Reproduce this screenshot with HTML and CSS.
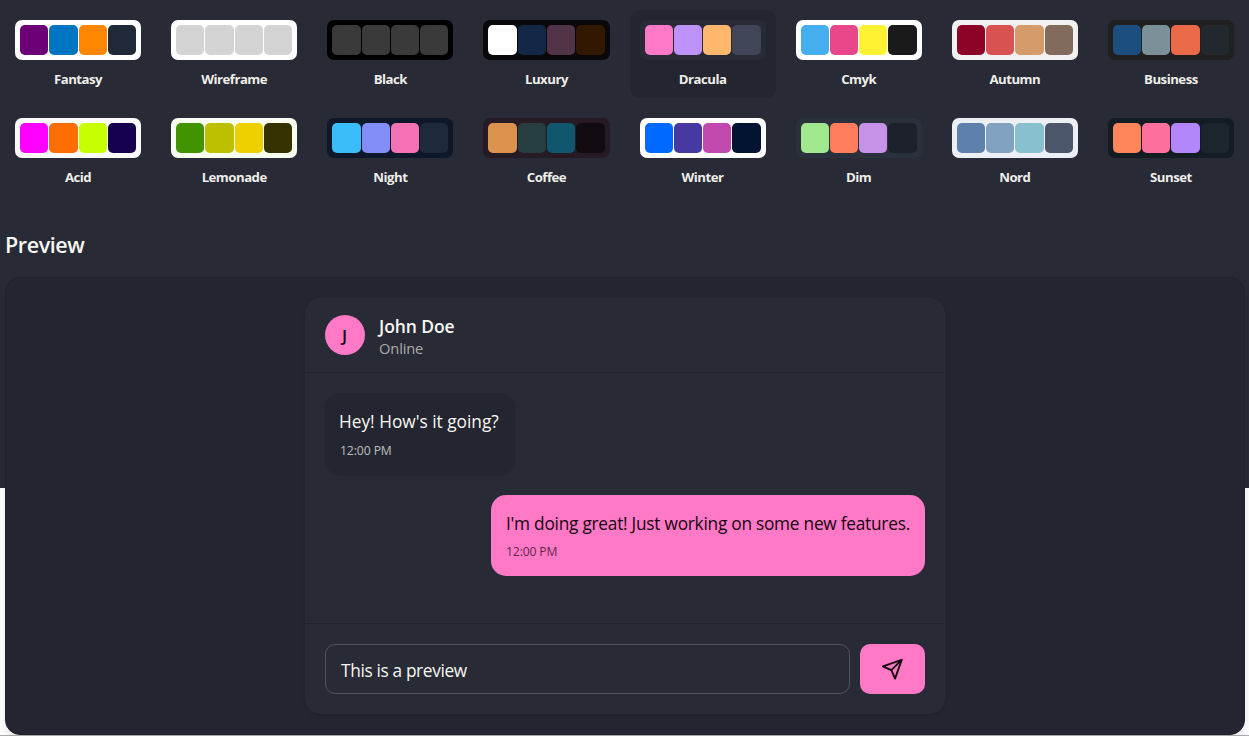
FILE: index.html
```html
<!DOCTYPE html>
<html lang="en">
<head>
<meta charset="utf-8">
<title>Theme settings</title>
<link rel="stylesheet" href="styles.css">
</head>
<body>
<main class="page">
  <div class="themes" id="themes"></div>
  <h3 class="title"><span>Preview</span></h3>
  <section class="preview">
    <div class="chat">
      <header class="chat-head">
        <div class="avatar">J</div>
        <div class="who">
          <h4 class="name"><span>John Doe</span></h4>
          <p class="status"><span>Online</span></p>
        </div>
      </header>
      <div class="messages">
        <div class="bubble received">
          <p class="text">Hey! How's it going?</p>
          <p class="time">12:00 PM</p>
        </div>
        <div class="bubble sent">
          <p class="text">I'm doing great! Just working on some new features.</p>
          <p class="time">12:00 PM</p>
        </div>
      </div>
      <footer class="composer">
        <div class="field"><span>This is a preview</span></div>
        <button class="send" aria-label="Send">
          <svg width="22.5" height="22.5" viewBox="0 0 24 24" fill="none" stroke="currentColor" stroke-width="2" stroke-linecap="round" stroke-linejoin="round"><path d="m22 2-7 20-4-9-9-4Z"/><path d="M22 2 11 13"/></svg>
        </button>
      </footer>
    </div>
  </section>
</main>
<script src="themes.js"></script>
</body>
</html>
```
FILE: styles.css
```css
* { box-sizing: border-box; margin: 0; padding: 0; }
body {
  height: 736px;
  overflow: hidden;
  background: #fff;
  color: #f8f8f2;
  font-family: "Open Sans", "Noto Sans", sans-serif;
  border-bottom: 1px solid #a9a9ac;
}
.page { height: 488px; padding: 10px 5px 0; background: #282a36; }
.themes { display: grid; grid-template-columns: repeat(8, minmax(0, 1fr)); gap: 10px; }
.theme {
  display: flex;
  flex-direction: column;
  align-items: center;
  gap: 7px;
  height: 88px;
  padding: 10px;
  border-radius: 10px;
}
.theme.active { background: #232530; }
.strip {
  display: grid;
  flex: none;
  grid-template-columns: repeat(4, 1fr);
  gap: 1px;
  width: 100%;
  height: 40px;
  padding: 5px;
  border-radius: 7px;
}
.swatch { border-radius: 5px; }
.label {
  font-size: 13.2px;
  line-height: 25px;
  font-weight: 700;
  letter-spacing: -0.5px;
  white-space: nowrap;
  color: #eeeee9;
}
.title { height: 30px; margin: 34px 0 17px; font-size: 21.5px; line-height: 30px; font-weight: 600; letter-spacing: -0.4px; }
.preview {
  width: 1240px;
  height: 458px;
  padding: 20px 0 0;
  border: 1px solid #20222c;
  border-radius: 15px;
  background: #232530;
  box-shadow: 0 5px 10px rgba(0, 0, 0, 0.1);
}
.chat {
  display: flex;
  flex-direction: column;
  width: 640px;
  height: 416px;
  margin: 0 auto;
  overflow: hidden;
  border-radius: 15px;
  background: #282a36;
  box-shadow: 0 1px 3px rgba(0, 0, 0, 0.15);
}
.chat-head {
  display: flex;
  align-items: center;
  gap: 14px;
  height: 75px;
  padding: 0 20px;
  border-bottom: 1px solid #20222c;
}
.avatar {
  display: flex;
  align-items: center;
  justify-content: center;
  width: 40px;
  height: 40px;
  padding-right: 1px;
  border-radius: 50%;
  background: #ff79c6;
  color: #16050e;
  font-size: 17px;
  font-weight: 600;
}
.name { font-size: 17.5px; line-height: 22px; font-weight: 600; letter-spacing: -0.1px; padding-top: 3px; }
.status { font-size: 14.7px; line-height: 22px; letter-spacing: -0.15px; color: #aaaaac; }
.messages { display: flex; flex-direction: column; gap: 20px; height: 250px; padding: 20px; }
.bubble { padding: 15px; border-radius: 15px; white-space: nowrap; }
.received { align-self: flex-start; width: 190px; height: 82px; background: #232530; box-shadow: 0 1px 2px rgba(0, 0, 0, 0.05); }
.received .text { margin-left: -1px; letter-spacing: 0; }
.received .time { margin-top: 7px; letter-spacing: -0.1px; }
.sent { align-self: flex-end; width: 434px; height: 81px; background: #ff79c6; color: #16050e; }
.text { font-size: 17.3px; line-height: 27px; letter-spacing: -0.25px; }
.time { margin-top: 6px; font-size: 12.2px; line-height: 18px; letter-spacing: -0.15px; opacity: 0.7; }
.composer { display: flex; gap: 10px; height: 91px; padding: 20px; border-top: 1px solid #20222c; }
.field {
  flex: 1;
  height: 50px;
  padding: 1px 15px 0;
  border: 1px solid #50525d;
  border-radius: 10px;
  font-size: 17.3px;
  line-height: 50px;
  letter-spacing: -0.35px;
}
.send {
  display: flex;
  align-items: center;
  justify-content: center;
  width: 65px;
  height: 50px;
  border: 0;
  border-radius: 10px;
  background: #ff79c6;
  color: #16050e;
}
```
FILE: themes.js
```js
// name, base colour, then primary, secondary, accent and neutral
const themes = [
  ["Fantasy", "#ffffff", "#6d0076", "#0075c2", "#ff8600", "#1f2937"],
  ["Wireframe", "#ffffff", "#d4d4d4", "#d4d4d4", "#d4d4d4", "#d4d4d4"],
  ["Black", "#000000", "#3a3a3a", "#3a3a3a", "#3a3a3a", "#3a3a3a"],
  ["Luxury", "#09090b", "#ffffff", "#152747", "#513448", "#331800"],
  ["Dracula", "#282a36", "#ff79c6", "#bd93f9", "#ffb86c", "#414558"],
  ["Cmyk", "#ffffff", "#45aeee", "#e8488a", "#fff232", "#1a1a1a"],
  ["Autumn", "#f1f1f1", "#8c0327", "#d85251", "#d59b6a", "#826a5c"],
  ["Business", "#202020", "#1c4e80", "#7c909a", "#ea6947", "#23282e"],
  ["Acid", "#fafafa", "#ff00ff", "#ff6e00", "#c8ff00", "#150050"],
  ["Lemonade", "#f8fdef", "#419400", "#bdc000", "#edd000", "#343300"],
  ["Night", "#0f172a", "#3abdf8", "#828df8", "#f471b5", "#1e293b"],
  ["Coffee", "#261b25", "#db924c", "#263e3f", "#10576d", "#120c12"],
  ["Winter", "#ffffff", "#0069ff", "#463aa2", "#c148ac", "#021431"],
  ["Dim", "#2a303c", "#9fe88d", "#ff7d5d", "#c792e9", "#1c212b"],
  ["Nord", "#eceff4", "#5e81ac", "#81a1c1", "#88c0d0", "#4c566a"],
  ["Sunset", "#121c22", "#ff865b", "#fd6f9c", "#b387fa", "#1b262c"]
];

const grid = document.getElementById("themes");
for (const [name, base, ...colors] of themes) {
  const swatches = colors.map(c => `<div class="swatch" style="background:${c}"></div>`).join("");
  grid.insertAdjacentHTML("beforeend",
    `<div class="theme${name === "Dracula" ? " active" : ""}">
      <div class="strip" style="background:${base}">${swatches}</div>
      <span class="label">${name}</span>
    </div>`);
}
```
